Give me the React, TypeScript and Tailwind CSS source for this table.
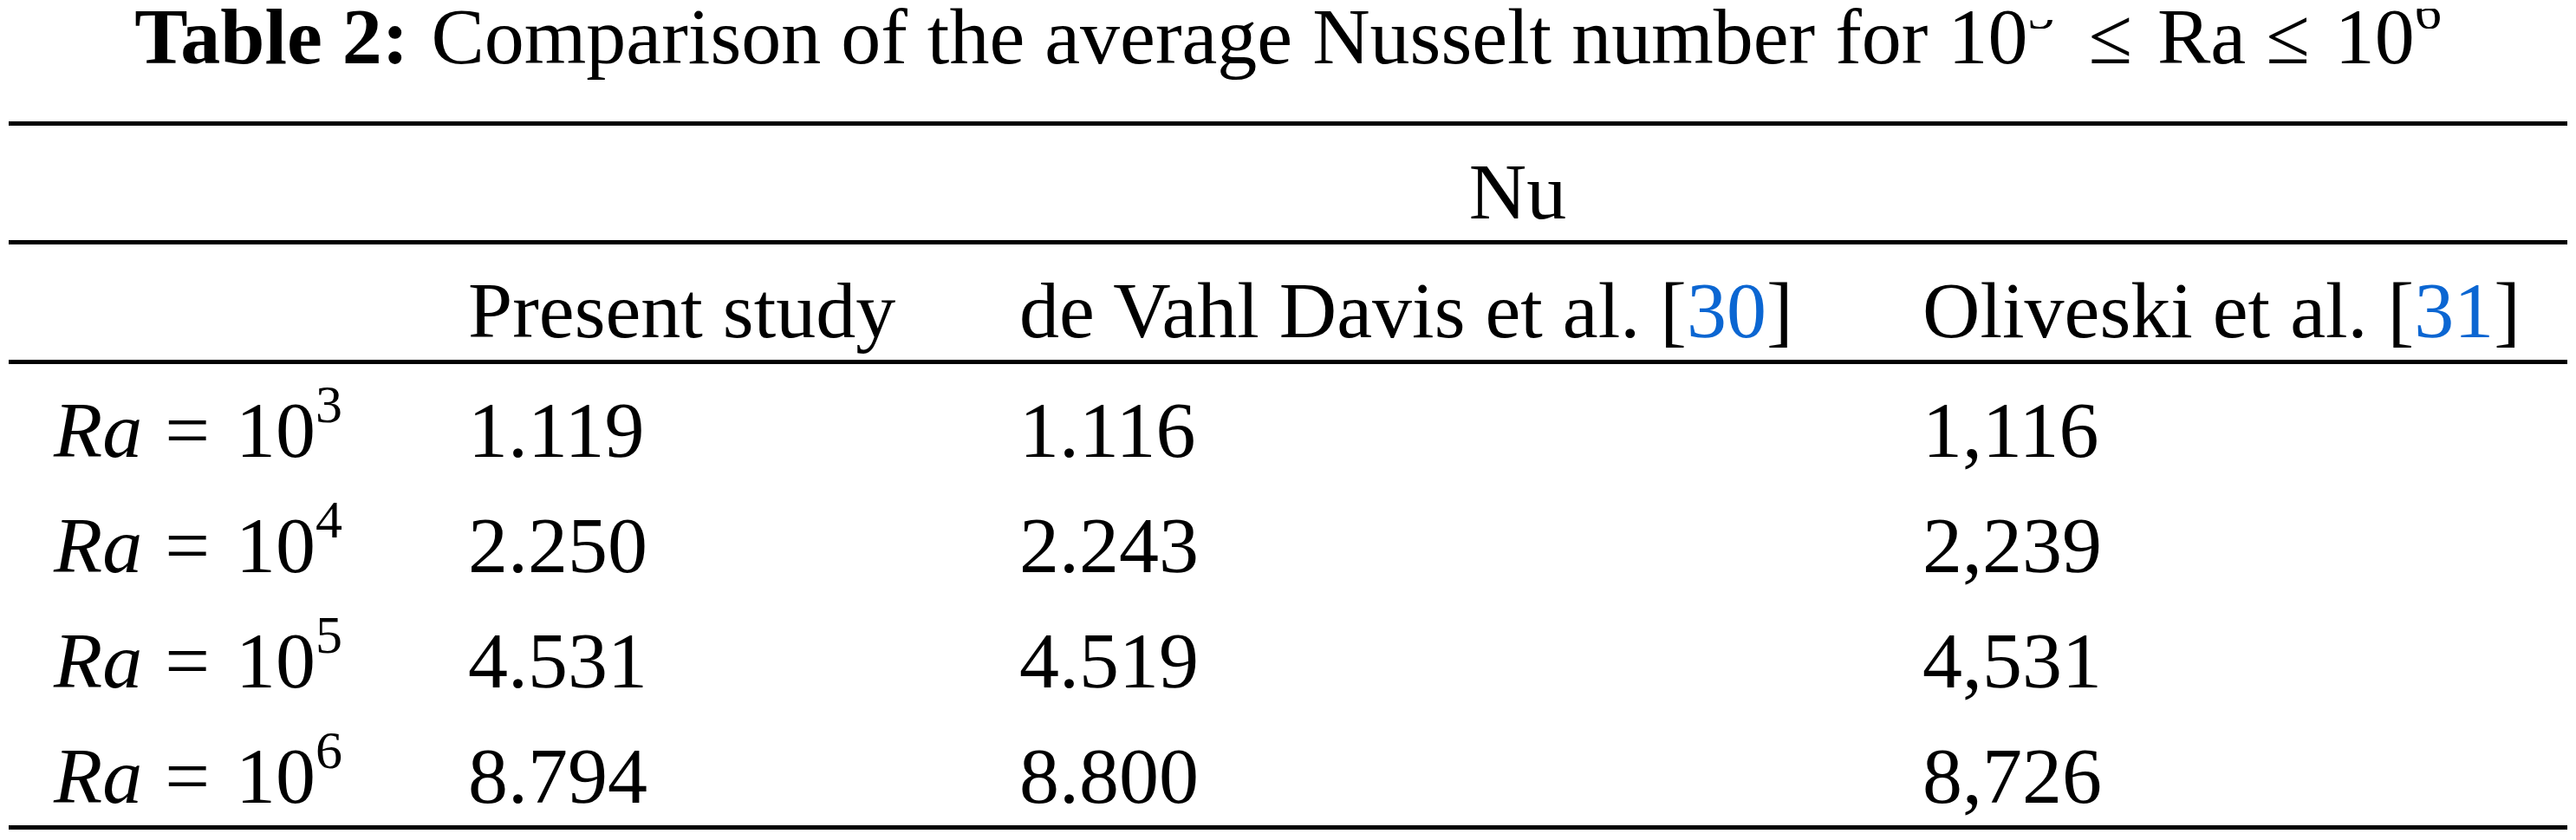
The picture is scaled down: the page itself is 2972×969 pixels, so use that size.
const rows = [
  { exp: "3", present: "1.119", davis: "1.116", oliveski: "1,116" },
  { exp: "4", present: "2.250", davis: "2.243", oliveski: "2,239" },
  { exp: "5", present: "4.531", davis: "4.519", oliveski: "4,531" },
  { exp: "6", present: "8.794", davis: "8.800", oliveski: "8,726" },
];

const cols = "grid grid-cols-[530px_636px_1042px_1fr]";

function Rule() {
  return <div className="h-[5px] bg-black" />;
}

export default function App() {
  return (
    <div className="w-[2972px] h-[969px] overflow-hidden bg-white text-black font-['Liberation_Serif','Times_New_Roman',serif] text-[92px]">
      {/* Caption, its superscripts run off the top edge */}
      <h1 className="h-[140px] text-center leading-[84px] font-normal whitespace-nowrap">
        <span className="font-bold mr-[3px]">Table 2:</span> Comparison of the average Nusselt number for 10
        <span className="relative -top-[40px] inline-block h-[10px] overflow-hidden text-[62px]">
          <span className="block -mt-[42px] leading-[62px]">3</span>
        </span>{" "}
        <span className="ml-[16px] mr-[6px]">≤</span> Ra <span className="mr-[6px]">≤</span> 10
        <span className="relative -top-[40px] inline-block h-[23px] overflow-hidden text-[62px]">
          <span className="block -mt-[29px] leading-[62px]">6</span>
        </span>
      </h1>

      <div className="mx-[10px]">
        <Rule />
        <div className={`${cols} h-[132px] pt-[30px] leading-[92px]`}>
          <div className="col-start-2 col-span-3 text-center">Nu</div>
        </div>
        <Rule />
        <div className={`${cols} h-[133px] pt-[30px] leading-[92px] whitespace-nowrap`}>
          <div />
          <div>Present study</div>
          <div>
            de Vahl Davis et al. [<span className="text-[#0b66d2]">30</span>]
          </div>
          <div>
            Oliveski et al. [<span className="text-[#0b66d2]">31</span>]
          </div>
        </div>
        <Rule />
        {rows.map((r) => (
          <div key={r.exp} className={`${cols} h-[133px] pt-[30px] leading-[92px] whitespace-nowrap`}>
            <div className="pl-[52px]">
              <span className="italic">Ra</span>
              <span className="ml-[26px] mr-[30px]">=</span>
              10
              <span className="relative -top-[40px] text-[62px]">{r.exp}</span>
            </div>
            <div>{r.present}</div>
            <div>{r.davis}</div>
            <div>{r.oliveski}</div>
          </div>
        ))}
        <Rule />
      </div>
    </div>
  );
}
